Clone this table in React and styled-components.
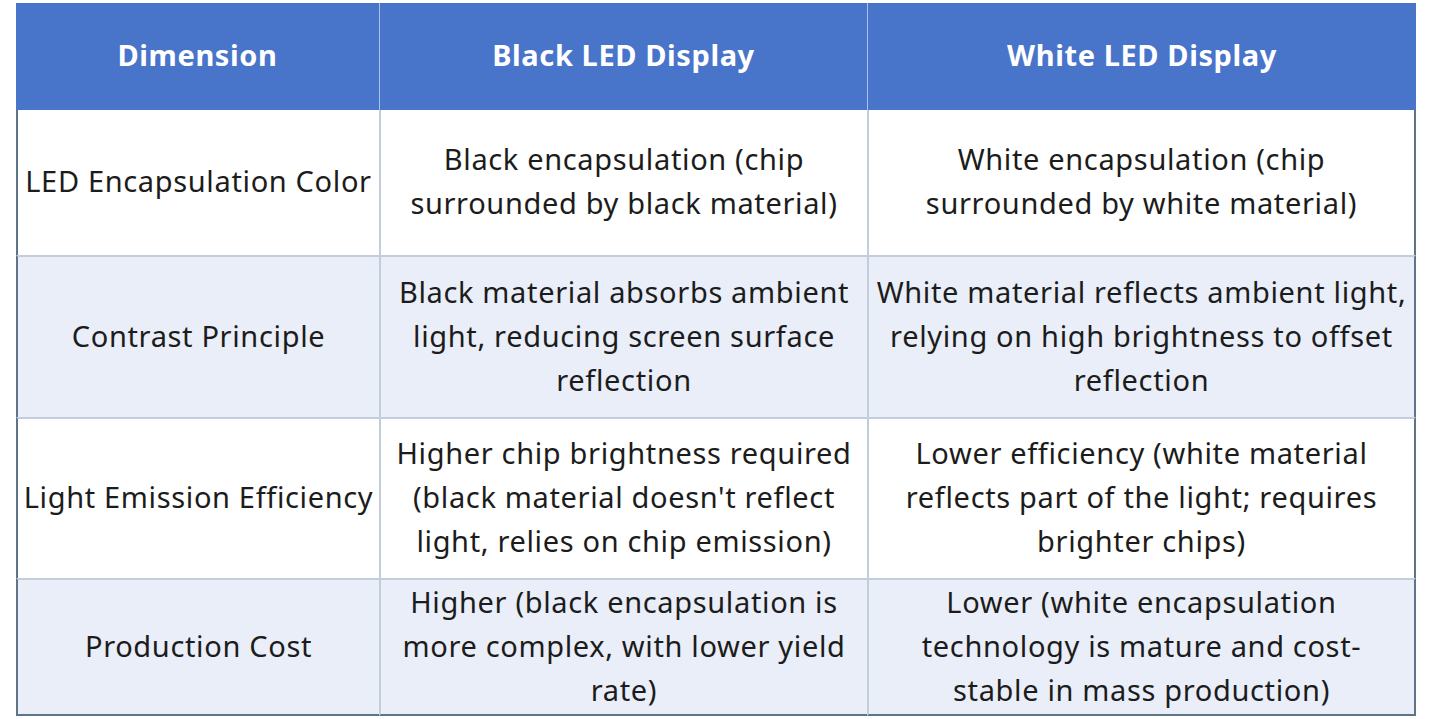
import React from "react";
import styled, { createGlobalStyle } from "styled-components";

const GlobalStyle = createGlobalStyle`
  html, body {
    margin: 0;
    padding: 0;
    background: #ffffff;
  }
  body {
    font-family: "Noto Sans", "Open Sans", sans-serif;
  }
`;

const columns = ["Dimension", "Black LED Display", "White LED Display"];

const rows = [
  {
    height: 145,
    shaded: false,
    cells: [
      ["LED Encapsulation Color"],
      ["Black encapsulation (chip", "surrounded by black material)"],
      ["White encapsulation (chip", "surrounded by white material)"],
    ],
  },
  {
    height: 162,
    shaded: true,
    cells: [
      ["Contrast Principle"],
      ["Black material absorbs ambient", "light, reducing screen surface", "reflection"],
      ["White material reflects ambient light,", "relying on high brightness to offset", "reflection"],
    ],
  },
  {
    height: 161,
    shaded: false,
    cells: [
      ["Light Emission Efficiency"],
      ["Higher chip brightness required", "(black material doesn't reflect", "light, relies on chip emission)"],
      ["Lower efficiency (white material", "reflects part of the light; requires", "brighter chips)"],
    ],
  },
  {
    height: 138,
    shaded: true,
    cells: [
      ["Production Cost"],
      ["Higher (black encapsulation is", "more complex, with lower yield", "rate)"],
      ["Lower (white encapsulation", "technology is mature and cost-", "stable in mass production)"],
    ],
  },
];

const Page = styled.div`
  padding: 3px 16px 3px 16px;
`;

const Table = styled.div`
  width: 1400px;
  display: grid;
  grid-template-columns: 363px 488px 549px;
`;

const HeadCell = styled.div`
  height: 107px;
  background: #4874c9;
  color: #ffffff;
  font-weight: 700;
  font-size: 29px;
  letter-spacing: 0.6px;
  display: flex;
  align-items: center;
  justify-content: center;
  padding-bottom: 4px;
  border-left: ${(p) => (p.first ? "none" : "1px solid #a9c1ea")};
  box-sizing: border-box;
`;

const Cell = styled.div`
  height: ${(p) => p.h}px;
  background: ${(p) => (p.shaded ? "#e9eef8" : "#ffffff")};
  color: #1c1c1c;
  font-size: 29px;
  letter-spacing: 0.65px;
  line-height: 44px;
  display: flex;
  flex-direction: column;
  align-items: center;
  justify-content: center;
  text-align: center;
  padding-bottom: 3px;
  box-sizing: border-box;
  border-top: ${(p) => (p.top ? "none" : "2px solid #c3cedd")};
  border-left: ${(p) => (p.col === 0 ? "2px solid #5f7585" : "2px solid #c3cedd")};
  border-right: ${(p) => (p.col === 2 ? "2px solid #5f7585" : "none")};
  border-bottom: ${(p) => (p.last ? "2px solid #5f7585" : "none")};
`;

const Line = styled.span`
  display: block;
  white-space: nowrap;
`;

export default function App() {
  return (
    <>
      <GlobalStyle />
      <Page>
        <Table>
          {columns.map((c, i) => (
            <HeadCell key={c} first={i === 0}>
              {c}
            </HeadCell>
          ))}
          {rows.map((r, ri) =>
            r.cells.map((lines, ci) => (
              <Cell
                key={ri + "-" + ci}
                h={r.height}
                shaded={r.shaded}
                col={ci}
                top={ri === 0}
                last={ri === rows.length - 1}
              >
                {lines.map((l) => (
                  <Line key={l}>{l}</Line>
                ))}
              </Cell>
            ))
          )}
        </Table>
      </Page>
    </>
  );
}
